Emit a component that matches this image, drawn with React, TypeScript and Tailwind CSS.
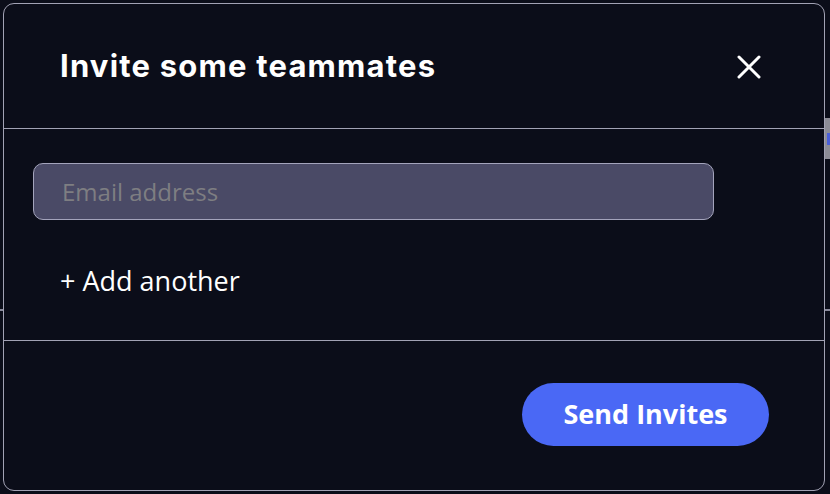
import React from "react";

export default function App() {
  return (
    <div className="relative w-[830px] h-[494px] bg-[#0b0d19] overflow-hidden" style={{ fontFamily: "'Open Sans', 'Noto Sans', sans-serif" }}>
      {/* background page remnants peeking out behind the modal */}
      <div className="absolute left-0 right-0 top-[309px] h-[2px] bg-[#8a8a9c]" />
      <div className="absolute left-[825px] top-[118px] w-[5px] h-[41px] bg-[#8c8c96]">
        <div className="absolute left-[2px] top-[15px] w-[3px] h-[12px] bg-[#4a5fd8]" />
      </div>

      <div className="absolute left-[3px] top-[3px] w-[822px] h-[488px] rounded-[11px] border border-[#a2a2b4] bg-[#0b0d19] flex flex-col">
        <div className="h-[125px] flex items-center justify-between pl-[56px] pr-[63px] border-b border-[#a2a2b4]">
          <h2 className="text-white font-bold text-[31px] tracking-[1.2px]" style={{ fontFamily: "Inter, 'Liberation Sans', sans-serif" }}>
            Invite some teammates
          </h2>
          <svg width="24" height="24" viewBox="0 0 24 24" className="mt-[2px]">
            <path d="M2 2 L22 22 M22 2 L2 22" stroke="white" strokeWidth="3" strokeLinecap="round" />
          </svg>
        </div>

        <div className="h-[212px] border-b border-[#a2a2b4] pl-[29px] pt-[34px] flex flex-col">
          <div className="w-[681px] h-[57px] rounded-[10px] border border-[#a4a4bc] bg-[#4a4a66] flex items-center pl-[28px]">
            <span className="text-[#7e7e82] text-[24px]">Email address</span>
          </div>
          <div className="mt-[41px] pl-[27px] text-white text-[27px]">+ Add another</div>
        </div>

        <div className="flex-1 flex items-center justify-end pr-[55px] pb-[2px]">
          <button className="h-[63px] w-[247px] rounded-full bg-[#4a68f5] text-white font-bold text-[27px]">
            Send Invites
          </button>
        </div>
      </div>
    </div>
  );
}
